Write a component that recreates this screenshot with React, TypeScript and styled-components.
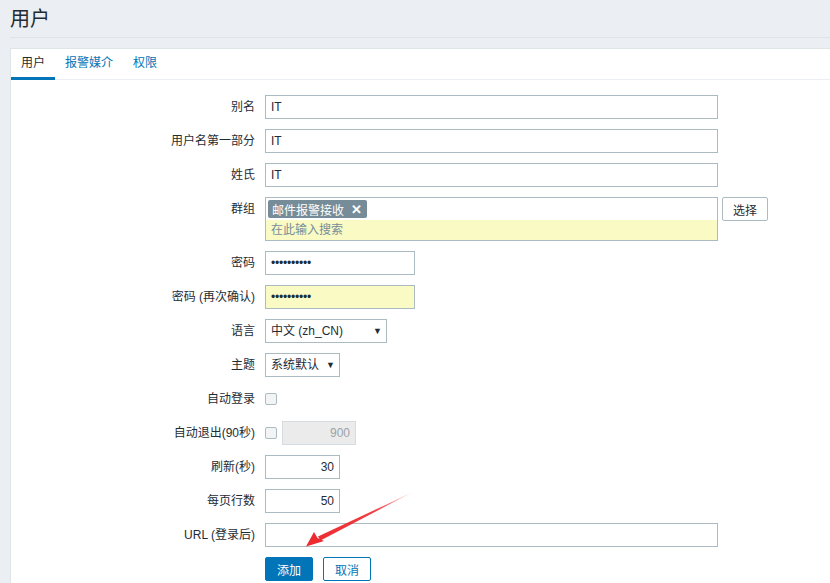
import { FunctionComponent, ReactNode } from 'react';
import styled, { createGlobalStyle } from 'styled-components';

const GlobalStyle = createGlobalStyle`
  html, body {
    margin: 0;
    padding: 0;
    background: #ebeef2;
  }
  body {
    font-family: "Liberation Sans", Arial, "Noto Sans CJK SC", sans-serif;
    font-size: 12px;
    color: #1f2c33;
  }
  * {
    box-sizing: border-box;
  }
`;

const Page = styled.div`
  position: relative;
  padding-left: 10px;
  height: 583px;
  overflow: hidden;
`;

const Header = styled.div`
  height: 38px;
  border-bottom: 1px solid #dde3e7;
  display: flex;
  align-items: center;
`;

const Title = styled.h1`
  margin: 0;
  margin-top: -3px;
  font-size: 20px;
  font-weight: normal;
  color: #1f2c33;
`;

const Panel = styled.div`
  margin-top: 10px;
  background: #fff;
  border: 1px solid #dfe4e7;
  border-right: none;
  min-height: 600px;
`;

const TabBar = styled.div`
  display: flex;
  height: 31px;
  border-bottom: 1px solid #ebeef2;
`;

const Tab = styled.div<{ $active?: boolean }>`
  padding: 0 10px;
  line-height: 28px;
  height: 31px;
  color: ${(p) => (p.$active ? '#1f2c33' : '#0275b8')};
  border-bottom: 3px solid ${(p) => (p.$active ? '#0275b8' : 'transparent')};
  margin-bottom: -1px;
  cursor: pointer;
`;

const Form = styled.div`
  display: grid;
  grid-template-columns: 244px 1fr;
  column-gap: 10px;
  row-gap: 10px;
  padding-top: 15px;
`;

const Label = styled.div`
  text-align: right;
  line-height: 24px;
  white-space: nowrap;
`;

const Field = styled.div`
  display: flex;
  align-items: flex-start;
  gap: 5px;
  min-height: 24px;
`;

const Input = styled.div<{ $w?: number; $right?: boolean; $yellow?: boolean; $disabled?: boolean }>`
  width: ${(p) => p.$w ?? 453}px;
  height: 24px;
  border: 1px solid #acbbc2;
  padding: 0 5px;
  line-height: 22px;
  text-align: ${(p) => (p.$right ? 'right' : 'left')};
  background: ${(p) => (p.$disabled ? '#ebebeb' : p.$yellow ? '#fafac4' : '#fff')};
  color: ${(p) => (p.$disabled ? '#9ba3a8' : '#1f2c33')};
  border-color: ${(p) => (p.$disabled ? '#d5dbdf' : '#acbbc2')};
`;

const Dots = styled.span`
  font-size: 12px;
  letter-spacing: -0.2px;
  color: #1f2c33;
`;

const Select = styled.div<{ $w: number }>`
  width: ${(p) => p.$w}px;
  height: 24px;
  border: 1px solid #acbbc2;
  padding: 0 4px 0 5px;
  line-height: 22px;
  display: flex;
  justify-content: space-between;
  align-items: center;
  font-size: 12px;
  background: #fff;
`;

const Caret = styled.span`
  font-size: 9px;
  color: #1f2c33;
  margin-top: -1px;
`;

const MultiSelect = styled.div`
  width: 453px;
  border: 1px solid #acbbc2;
  display: flex;
  flex-direction: column;
`;

const TagRow = styled.div`
  padding: 2px 2px 2px 2px;
  display: flex;
`;

const Tag = styled.span`
  display: inline-flex;
  align-items: center;
  gap: 7px;
  height: 18px;
  padding: 0 5px 0 4px;
  background: #768d99;
  color: #fff;
  border-radius: 2px;
  font-size: 12px;
`;

const TagClose = styled.span`
  font-size: 13px;
  font-weight: bold;
`;

const Search = styled.div`
  height: 20px;
  background: #fafac4;
  color: #768d99;
  padding: 0 5px;
  line-height: 20px;
`;

const Button = styled.button<{ $primary?: boolean; $outline?: boolean }>`
  height: 24px;
  min-width: 48px;
  padding: 0 10px;
  border-radius: 2px;
  font-family: inherit;
  font-size: 12px;
  cursor: pointer;
  border: 1px solid ${(p) => (p.$primary || p.$outline ? '#0275b8' : '#acbbc2')};
  background: ${(p) => (p.$primary ? '#0275b8' : '#fff')};
  color: ${(p) => (p.$primary ? '#fff' : p.$outline ? '#0275b8' : '#1f2c33')};
`;

const SelectButton = styled(Button)`
  margin-left: -1px;
  min-width: 46px;
`;

const Checkbox = styled.span`
  display: inline-block;
  width: 12px;
  height: 12px;
  margin-top: 6px;
  border: 1px solid #acbbc2;
  border-radius: 2px;
  background: #f2f4f5;
`;

const Buttons = styled.div`
  display: flex;
  gap: 10px;
`;

const Arrow = styled.svg`
  position: absolute;
  left: 0;
  top: 0;
  pointer-events: none;
`;

const Row: FunctionComponent<{ label: string; children: ReactNode }> = ({ label, children }) => (
  <>
    <Label>{label}</Label>
    <Field>{children}</Field>
  </>
);

const App: FunctionComponent = () => {
  return (
    <>
      <GlobalStyle />
      <Page>
        <Header>
          <Title>用户</Title>
        </Header>
        <Panel>
          <TabBar>
            <Tab $active>用户</Tab>
            <Tab>报警媒介</Tab>
            <Tab>权限</Tab>
          </TabBar>
          <Form>
            <Row label="别名">
              <Input>IT</Input>
            </Row>
            <Row label="用户名第一部分">
              <Input>IT</Input>
            </Row>
            <Row label="姓氏">
              <Input>IT</Input>
            </Row>
            <Row label="群组">
              <MultiSelect>
                <TagRow>
                  <Tag>
                    邮件报警接收<TagClose>✕</TagClose>
                  </Tag>
                </TagRow>
                <Search>在此输入搜索</Search>
              </MultiSelect>
              <SelectButton>选择</SelectButton>
            </Row>
            <Row label="密码">
              <Input $w={150}>
                <Dots>••••••••••</Dots>
              </Input>
            </Row>
            <Row label="密码 (再次确认)">
              <Input $w={150} $yellow>
                <Dots>••••••••••</Dots>
              </Input>
            </Row>
            <Row label="语言">
              <Select $w={122}>
                中文 (zh_CN)<Caret>▼</Caret>
              </Select>
            </Row>
            <Row label="主题">
              <Select $w={75}>
                系统默认<Caret>▼</Caret>
              </Select>
            </Row>
            <Row label="自动登录">
              <Checkbox />
            </Row>
            <Row label="自动退出(90秒)">
              <Checkbox />
              <Input $w={74} $right $disabled>
                900
              </Input>
            </Row>
            <Row label="刷新(秒)">
              <Input $w={75} $right>
                30
              </Input>
            </Row>
            <Row label="每页行数">
              <Input $w={75} $right>
                50
              </Input>
            </Row>
            <Row label="URL (登录后)">
              <Input />
            </Row>
            <div />
            <Buttons>
              <Button $primary>添加</Button>
              <Button $outline>取消</Button>
            </Buttons>
          </Form>
        </Panel>
        <Arrow width="830" height="583" viewBox="0 0 830 583">
          <defs>
            <linearGradient id="arrowFade" x1="413" y1="492" x2="307" y2="546" gradientUnits="userSpaceOnUse">
              <stop offset="0" stopColor="#f0353a" stopOpacity="0.15" />
              <stop offset="0.35" stopColor="#ee2a30" stopOpacity="0.9" />
              <stop offset="1" stopColor="#ec2a2f" />
            </linearGradient>
          </defs>
          <polygon points="413,492 318,536.5 320.5,540.5" fill="url(#arrowFade)" />
          <polygon points="306,546.5 314,532 317.5,538 324,541" fill="#ec2a2f" />
        </Arrow>
      </Page>
    </>
  );
};

export default App;
